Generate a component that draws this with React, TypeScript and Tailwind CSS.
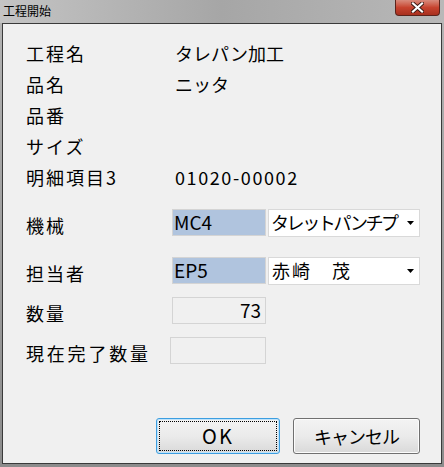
import React from 'react';

const jp = { fontFamily: '"Noto Sans CJK JP", "Noto Sans", sans-serif' };

function Arrow() {
  return (
    <svg width="7" height="4" viewBox="0 0 7 4" className="shrink-0">
      <path d="M0 0h7L3.5 4z" fill="#000" />
    </svg>
  );
}

function InfoRow({ label, value, valueClass = '' }: { label: string; value?: string; valueClass?: string }) {
  return (
    <div className="flex h-[31px] items-center">
      <div className="w-[172px] pl-[23px] text-[18px] tracking-[2px]">{label}</div>
      {value && <div className={`text-[18px] ${valueClass}`}>{value}</div>}
    </div>
  );
}

export default function App() {
  return (
    <div
      className="flex h-[467px] w-[444px] flex-col bg-gradient-to-b from-[#b4b4b4] to-[#8c8c8c] text-black"
      style={jp}
    >
      {/* title bar */}
      <div className="flex h-[23px] shrink-0 items-start justify-between bg-gradient-to-r from-[#c4c4c4] via-[#a6a6a6] to-[#b8b8b8]">
        <div className="pl-[3px] pt-[3px] text-[12px] leading-[16px]">工程開始</div>
        <div className="mr-[4px] flex h-[16px] w-[45px] items-center justify-center rounded-b-[4px] border border-t-0 border-[#5b231b] bg-gradient-to-b from-[#d88a7c] via-[#c7432f] to-[#a8301f]">
          <svg width="13" height="11" viewBox="0 0 13 11">
            <path d="M2 1.5l9 8M11 1.5l-9 8" stroke="#3b1a14" strokeWidth="4" strokeLinecap="square" />
            <path d="M2 1.5l9 8M11 1.5l-9 8" stroke="#fff" strokeWidth="2.2" strokeLinecap="square" />
          </svg>
        </div>
      </div>

      {/* client area */}
      <div className="mx-[2px] mb-[3px] flex flex-1 flex-col border border-[#3a3a3a] bg-[#f0f0f0]">
        <div className="pt-[14px]">
          <InfoRow label="工程名" value="タレパン加工" />
          <InfoRow label="品名" value="ニッタ" />
          <InfoRow label="品番" />
          <InfoRow label="サイズ" />
          <InfoRow label="明細項目3" value="01020-00002" valueClass="tracking-[1.6px]" />
        </div>

        <div className="mt-[16px] flex h-[27px] items-center">
          <div className="w-[169px] pl-[23px] pt-[6px] text-[18px] tracking-[2px]">機械</div>
          <div className="flex h-[27px] w-[94px] items-center border border-[#d4d4d4] bg-[#b0c4de] pl-[1px] text-[19px]">MC4</div>
          <div className="ml-[2px] flex h-[28px] w-[152px] items-center gap-[3px] border border-[#d9d9d9] bg-white pl-[2px] pr-[5px]">
            <div className="flex-1 whitespace-nowrap text-[18px] tracking-[-2.4px]">タレットパンチプ</div>
            <Arrow />
          </div>
        </div>

        <div className="mt-[21px] flex h-[27px] items-center">
          <div className="w-[169px] pl-[23px] pt-[6px] text-[18px] tracking-[2px]">担当者</div>
          <div className="flex h-[27px] w-[94px] items-center border border-[#d4d4d4] bg-[#b0c4de] pl-[1px] text-[19px]">EP5</div>
          <div className="ml-[2px] flex h-[28px] w-[152px] items-center gap-[3px] border border-[#d9d9d9] bg-white pl-[3px] pr-[5px]">
            <div className="flex-1 whitespace-nowrap text-[18px] tracking-[2px]">赤崎　茂</div>
            <Arrow />
          </div>
        </div>

        <div className="mt-[13px] flex h-[27px] items-center">
          <div className="w-[169px] pl-[23px] pt-[6px] text-[18px] tracking-[2px]">数量</div>
          <div className="flex h-[27px] w-[94px] items-center justify-end border border-[#d4d4d4] bg-[#f0f0f0] pr-[4px] text-[19px]">73</div>
        </div>

        <div className="mt-[13px] flex h-[27px] items-center">
          <div className="w-[167px] whitespace-nowrap pl-[23px] pt-[6px] text-[18px] tracking-[2.8px]">現在完了数量</div>
          <div className="h-[27px] w-[96px] border border-[#d4d4d4] bg-[#f0f0f0]" />
        </div>

        <div className="mt-[54px] flex gap-[13px] pl-[153px]">
          <button className="flex h-[36px] w-[124px] items-center justify-center rounded-[3px] border border-[#3c9ee0] bg-gradient-to-b from-[#f3f3f3] via-[#ebebeb] to-[#d9d9d9] p-[2px] shadow-[inset_0_0_0_1px_#bfe3fb]">
            <span className="flex h-full w-full items-center justify-center border border-dotted border-black text-[20px] tracking-[2px]">OK</span>
          </button>
          <button className="flex h-[36px] w-[127px] items-center justify-center rounded-[3px] border border-[#707070] bg-gradient-to-b from-[#f3f3f3] via-[#ebebeb] to-[#d9d9d9] text-[18px] tracking-[-1px] shadow-[inset_0_0_0_1px_#fcfcfc]">
            キャンセル
          </button>
        </div>
      </div>
    </div>
  );
}
